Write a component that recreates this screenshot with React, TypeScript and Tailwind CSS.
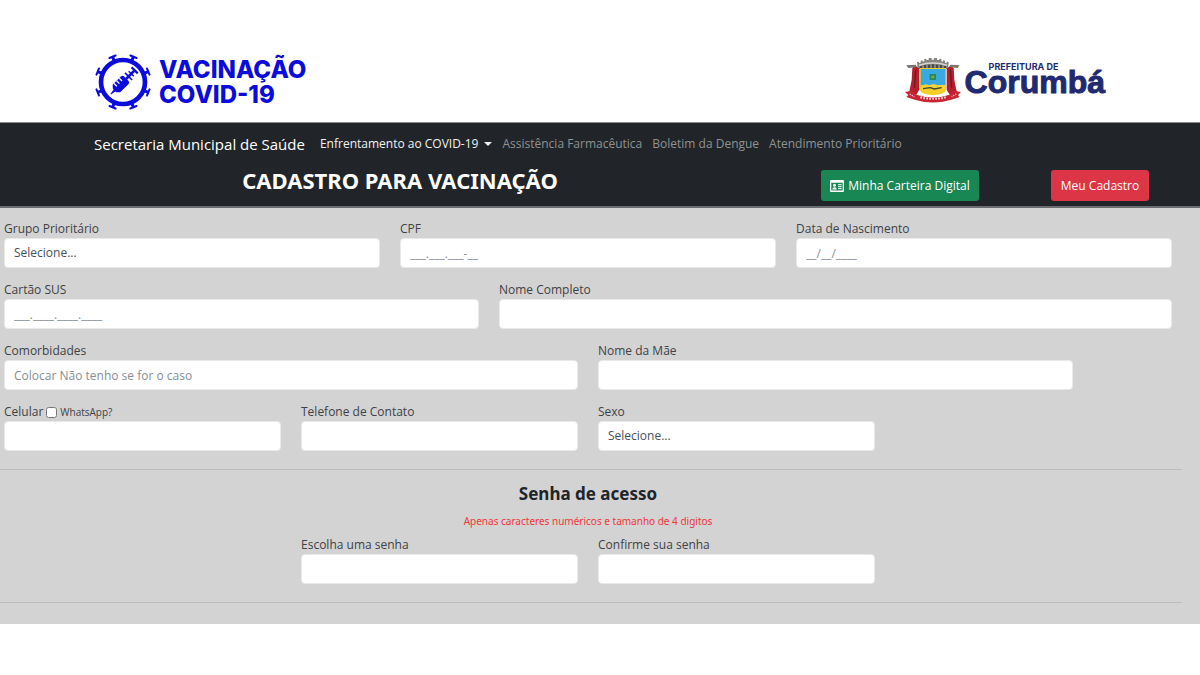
import { useState } from "react";
import type { ReactNode } from "react";

const inputClass =
  "block h-[30px] w-full appearance-none rounded-[4px] border border-[#e9e9e9] bg-white px-[9px] text-xs text-[#495057] placeholder-[#868e96] outline-none focus:border-blue-400";

const navLinks = [
  { href: "#farmacia", label: "Assistência Farmacêutica" },
  { href: "#dengue", label: "Boletim da Dengue" },
  { href: "#atendimento", label: "Atendimento Prioritário" },
];

const spikes = [22.5, 67.5, 112.5, 157.5, 202.5, 247.5, 292.5, 337.5];

function VirusLogo() {
  return (
    <svg className="h-14 w-14 shrink-0" viewBox="0 0 168 168" aria-hidden="true">
      <circle cx="84" cy="84" r="66" fill="none" stroke="#0b0bdc" strokeWidth="14" />
      {spikes.map((angle) => (
        <g key={angle} transform={`rotate(${angle} 84 84)`} fill="none" stroke="#0b0bdc" strokeLinecap="round">
          <path d="M84 16V4" strokeWidth="9" />
          <path d="M74 2H94" strokeWidth="6" />
        </g>
      ))}
      {/* Syringe */}
      <g transform="rotate(-45 84 84)" fill="#0b0bdc">
        <path d="M32 82.500L50 80V88L32 85.500Z" />
        <path d="M48 77L56 68H92Q98 68 98 74V94Q98 100 92 100H56L48 91Z" />
        <path d="M105 69H110V99H105Z" />
        <path d="M98 80H131V88H98Z" />
        <path d="M117 73H121V95H117Z" />
        <path d="M130 71H137V97H130Z" />
        <path d="M62 68V80M73 68V80M84 68V80" stroke="#fff" strokeWidth="4" />
      </g>
    </svg>
  );
}

function CoatOfArms() {
  return (
    <svg className="h-[46px] w-14 shrink-0" viewBox="0 0 168 138" aria-hidden="true">
      {/* Mural crown */}
      <path
        d="M38 36L36 15L42 14V18L47 17V11L53 10V14L58 13V6L64 5V9H71V3H80V8H87V3H96V9H103V5L109 6V13L114 14V10L120 11V17L125 18V14L131 15L129 36Z"
        fill="#85827f"
      />
      <path d="M42 25Q84 11 126 25" fill="none" stroke="#d8d4cf" strokeWidth="5" />
      <path d="M48 34V27M60 34V24M72 34V23M84 34V22M96 34V23M108 34V24M120 34V27" stroke="#3f3f42" strokeWidth="5" />
      {/* Side columns */}
      <path d="M22 32L32 26L43 35V98L34 113L12 108L20 69Z" fill="#b51e2c" />
      <path d="M146 32L136 26L125 35V98L134 113L156 108L148 69Z" fill="#b51e2c" />
      <path d="M4 25L32 23L35 30L10 33ZM164 25L136 23L133 30L158 33Z" fill="#77736f" />
      <path d="M32 38L28 92M136 38L140 92" stroke="#6e1820" strokeWidth="4" />
      {/* Shield */}
      <path d="M45 33H123V97Q123 112 84 115Q45 112 45 97Z" fill="#f3cf27" />
      <path d="M47 36H121V84H47Z" fill="#39a9df" />
      <path d="M47 87L62 82L73 85L85 81L99 85L121 83V96H47Z" fill="#f5d338" />
      <path d="M54 95L76 92L88 96L110 92" fill="none" stroke="#374632" strokeWidth="4" />
      <path d="M74 51H93V69H74Z" fill="#24895c" />
      <path d="M79 56H88V64H79Z" fill="#78a843" />
      {/* Ribbon */}
      <path d="M0 105L21 101L34 113Q84 130 134 113L147 101L168 105L159 114L164 120L139 128Q84 145 29 128L4 120L10 114Z" fill="#c82434" />
      <path d="M46 121Q84 130 122 121" fill="none" stroke="#f7dddd" strokeWidth="6" strokeDasharray="5 4" />
      <path d="M14 111L28 119M154 111L140 119" stroke="#efc4c4" strokeWidth="4" strokeDasharray="4 3" />
    </svg>
  );
}

function CardIcon() {
  return (
    <svg className="h-3 w-[14px]" viewBox="0 0 14 12" aria-hidden="true">
      <path
        fillRule="evenodd"
        d="M1 0H13Q14 0 14 1V11Q14 12 13 12H1Q0 12 0 11V1Q0 0 1 0ZM1.300 2.800V10.500H12.700V2.800Z"
        fill="#fff"
      />
      <circle cx="4.500" cy="5.300" r="1.500" fill="#fff" />
      <path d="M2.200 9.400Q2.400 7.300 4.500 7.300T6.800 9.400Z" fill="#fff" />
      <path d="M8 4.700H11.700M8 6.700H11.700M8 8.700H11.700" stroke="#fff" strokeWidth="1" />
    </svg>
  );
}

interface FieldProps {
  id: string;
  label: string;
  className: string;
  extra?: ReactNode;
  children: ReactNode;
}

function Field({ id, label, className, extra, children }: FieldProps) {
  return (
    <div className={className}>
      <div className="flex h-[18px] items-center gap-[3px]">
        <label htmlFor={id} className="text-xs leading-[18px]">
          {label}
        </label>
        {extra}
      </div>
      {children}
    </div>
  );
}

export default function App() {
  const [whatsapp, setWhatsapp] = useState(false);

  return (
    <div className="bg-white font-['Open_Sans','Noto_Sans',sans-serif] text-[#212529]">
      <header className="flex items-start justify-between px-[95px] pt-[54px] pb-3">
        <a href="#inicio" className="flex items-center gap-2 text-[#0b0bdc]">
          <VirusLogo />
          <span className="font-['Inter',sans-serif] text-2xl leading-[25px] font-extrabold">
            VACINAÇÃO
            <br />
            COVID-19
          </span>
        </a>
        <a href="#prefeitura" className="flex items-start gap-1 pt-[3px] text-[#1f2a70]">
          <CoatOfArms />
          <span className="flex flex-col pt-[5px] font-['Liberation_Sans',sans-serif] font-bold">
            <span className="pl-6 font-['Inter',sans-serif] text-[9px] leading-[9px]">PREFEITURA DE</span>
            <span className="text-[32px] leading-[22px] [-webkit-text-stroke:1px_#1f2a70]">Corumbá</span>
          </span>
        </a>
      </header>

      <div className="border-t border-b-2 border-t-[#8a8c8e] border-b-[#6c6d70] bg-[#212529] pt-[9px] pb-[5px]">
        <nav className="flex h-6 items-center px-[94px]">
          <a href="#saude" className="mr-[15px] text-[15px] text-white">
            Secretaria Municipal de Saúde
          </a>
          <div className="flex items-center gap-[10px] text-xs">
            <button type="button" className="flex items-center gap-[6px] text-[#f1f1f1]">
              Enfrentamento ao COVID-19
              <svg className="h-1 w-2" viewBox="0 0 8 4" aria-hidden="true">
                <path d="M0 0H8L4 4Z" fill="currentColor" />
              </svg>
            </button>
            {navLinks.map((link) => (
              <a key={link.href} href={link.href} className="text-[#8f9193] hover:text-gray-300">
                {link.label}
              </a>
            ))}
          </div>
        </nav>
        <div className="grid grid-cols-6 pt-3">
          <h1 className="col-span-4 text-center font-['Noto_Sans',sans-serif] text-[22px] leading-6 font-bold text-white">
            CADASTRO PARA VACINAÇÃO
          </h1>
          <div className="flex justify-center pt-[2px]">
            <button
              type="button"
              className="flex h-[31px] items-center gap-1 rounded-[3px] bg-[#198754] px-[9px] text-xs text-white hover:bg-[#157347]"
            >
              <CardIcon />
              Minha Carteira Digital
            </button>
          </div>
          <div className="flex justify-center pt-[2px]">
            <button
              type="button"
              className="h-[31px] rounded-[3px] bg-[#dc3545] px-[10px] text-xs text-white hover:bg-[#bb2d3b]"
            >
              Meu Cadastro
            </button>
          </div>
        </div>
      </div>

      <form className="bg-[#d3d3d3] pt-3 pb-[21px] text-[#3f4245]" onSubmit={(e) => e.preventDefault()}>
        <div className="grid grid-cols-12 gap-x-5 gap-y-[13px] pr-7 pl-1">
          <Field id="grupo" label="Grupo Prioritário" className="col-span-4">
            <select id="grupo" className={inputClass}>
              <option>Selecione...</option>
            </select>
          </Field>
          <Field id="cpf" label="CPF" className="col-span-4">
            <input id="cpf" className={inputClass} placeholder="___.___.___-__" />
          </Field>
          <Field id="nascimento" label="Data de Nascimento" className="col-span-4">
            <input id="nascimento" className={inputClass} placeholder="__/__/____" />
          </Field>

          <Field id="sus" label="Cartão SUS" className="col-span-5">
            <input id="sus" className={inputClass} placeholder="___.____.____.____" />
          </Field>
          <Field id="nome" label="Nome Completo" className="col-span-7">
            <input id="nome" className={inputClass} />
          </Field>

          <Field id="comorbidades" label="Comorbidades" className="col-span-6">
            <input id="comorbidades" className={inputClass} placeholder="Colocar Não tenho se for o caso" />
          </Field>
          <Field id="mae" label="Nome da Mãe" className="col-span-5">
            <input id="mae" className={inputClass} />
          </Field>

          <Field
            id="celular"
            label="Celular"
            className="col-span-3 col-start-1"
            extra={
              <>
                <input
                  id="whatsapp"
                  type="checkbox"
                  className="h-[11px] w-[11px]"
                  checked={whatsapp}
                  onChange={(e) => setWhatsapp(e.target.checked)}
                />
                <label htmlFor="whatsapp" className="text-[10px] leading-[18px]">
                  WhatsApp?
                </label>
              </>
            }
          >
            <input id="celular" type="tel" className={inputClass} />
          </Field>
          <Field id="telefone" label="Telefone de Contato" className="col-span-3">
            <input id="telefone" type="tel" className={inputClass} />
          </Field>
          <Field id="sexo" label="Sexo" className="col-span-3">
            <select id="sexo" className={inputClass}>
              <option>Selecione...</option>
            </select>
          </Field>
        </div>

        <hr className="mt-[18px] mr-[18px] border-[#bcbcbc]" />

        <div className="pr-7 pl-1 text-center font-['Noto_Sans',sans-serif]">
          <h2 className="pt-3 text-[17px] leading-6 font-bold text-[#212529]">Senha de acesso</h2>
          <p className="pt-[6px] text-[10px] leading-[18px] text-[#f0353b]">
            Apenas caracteres numéricos e tamanho de 4 digitos
          </p>
        </div>
        <div className="grid grid-cols-12 gap-x-5 pt-[6px] pr-7 pl-1">
          <Field id="senha" label="Escolha uma senha" className="col-span-3 col-start-4">
            <input id="senha" type="password" className={inputClass} />
          </Field>
          <Field id="confirmar" label="Confirme sua senha" className="col-span-3">
            <input id="confirmar" type="password" className={inputClass} />
          </Field>
        </div>

        <hr className="mt-[18px] mr-[18px] border-[#bcbcbc]" />
      </form>
    </div>
  );
}
